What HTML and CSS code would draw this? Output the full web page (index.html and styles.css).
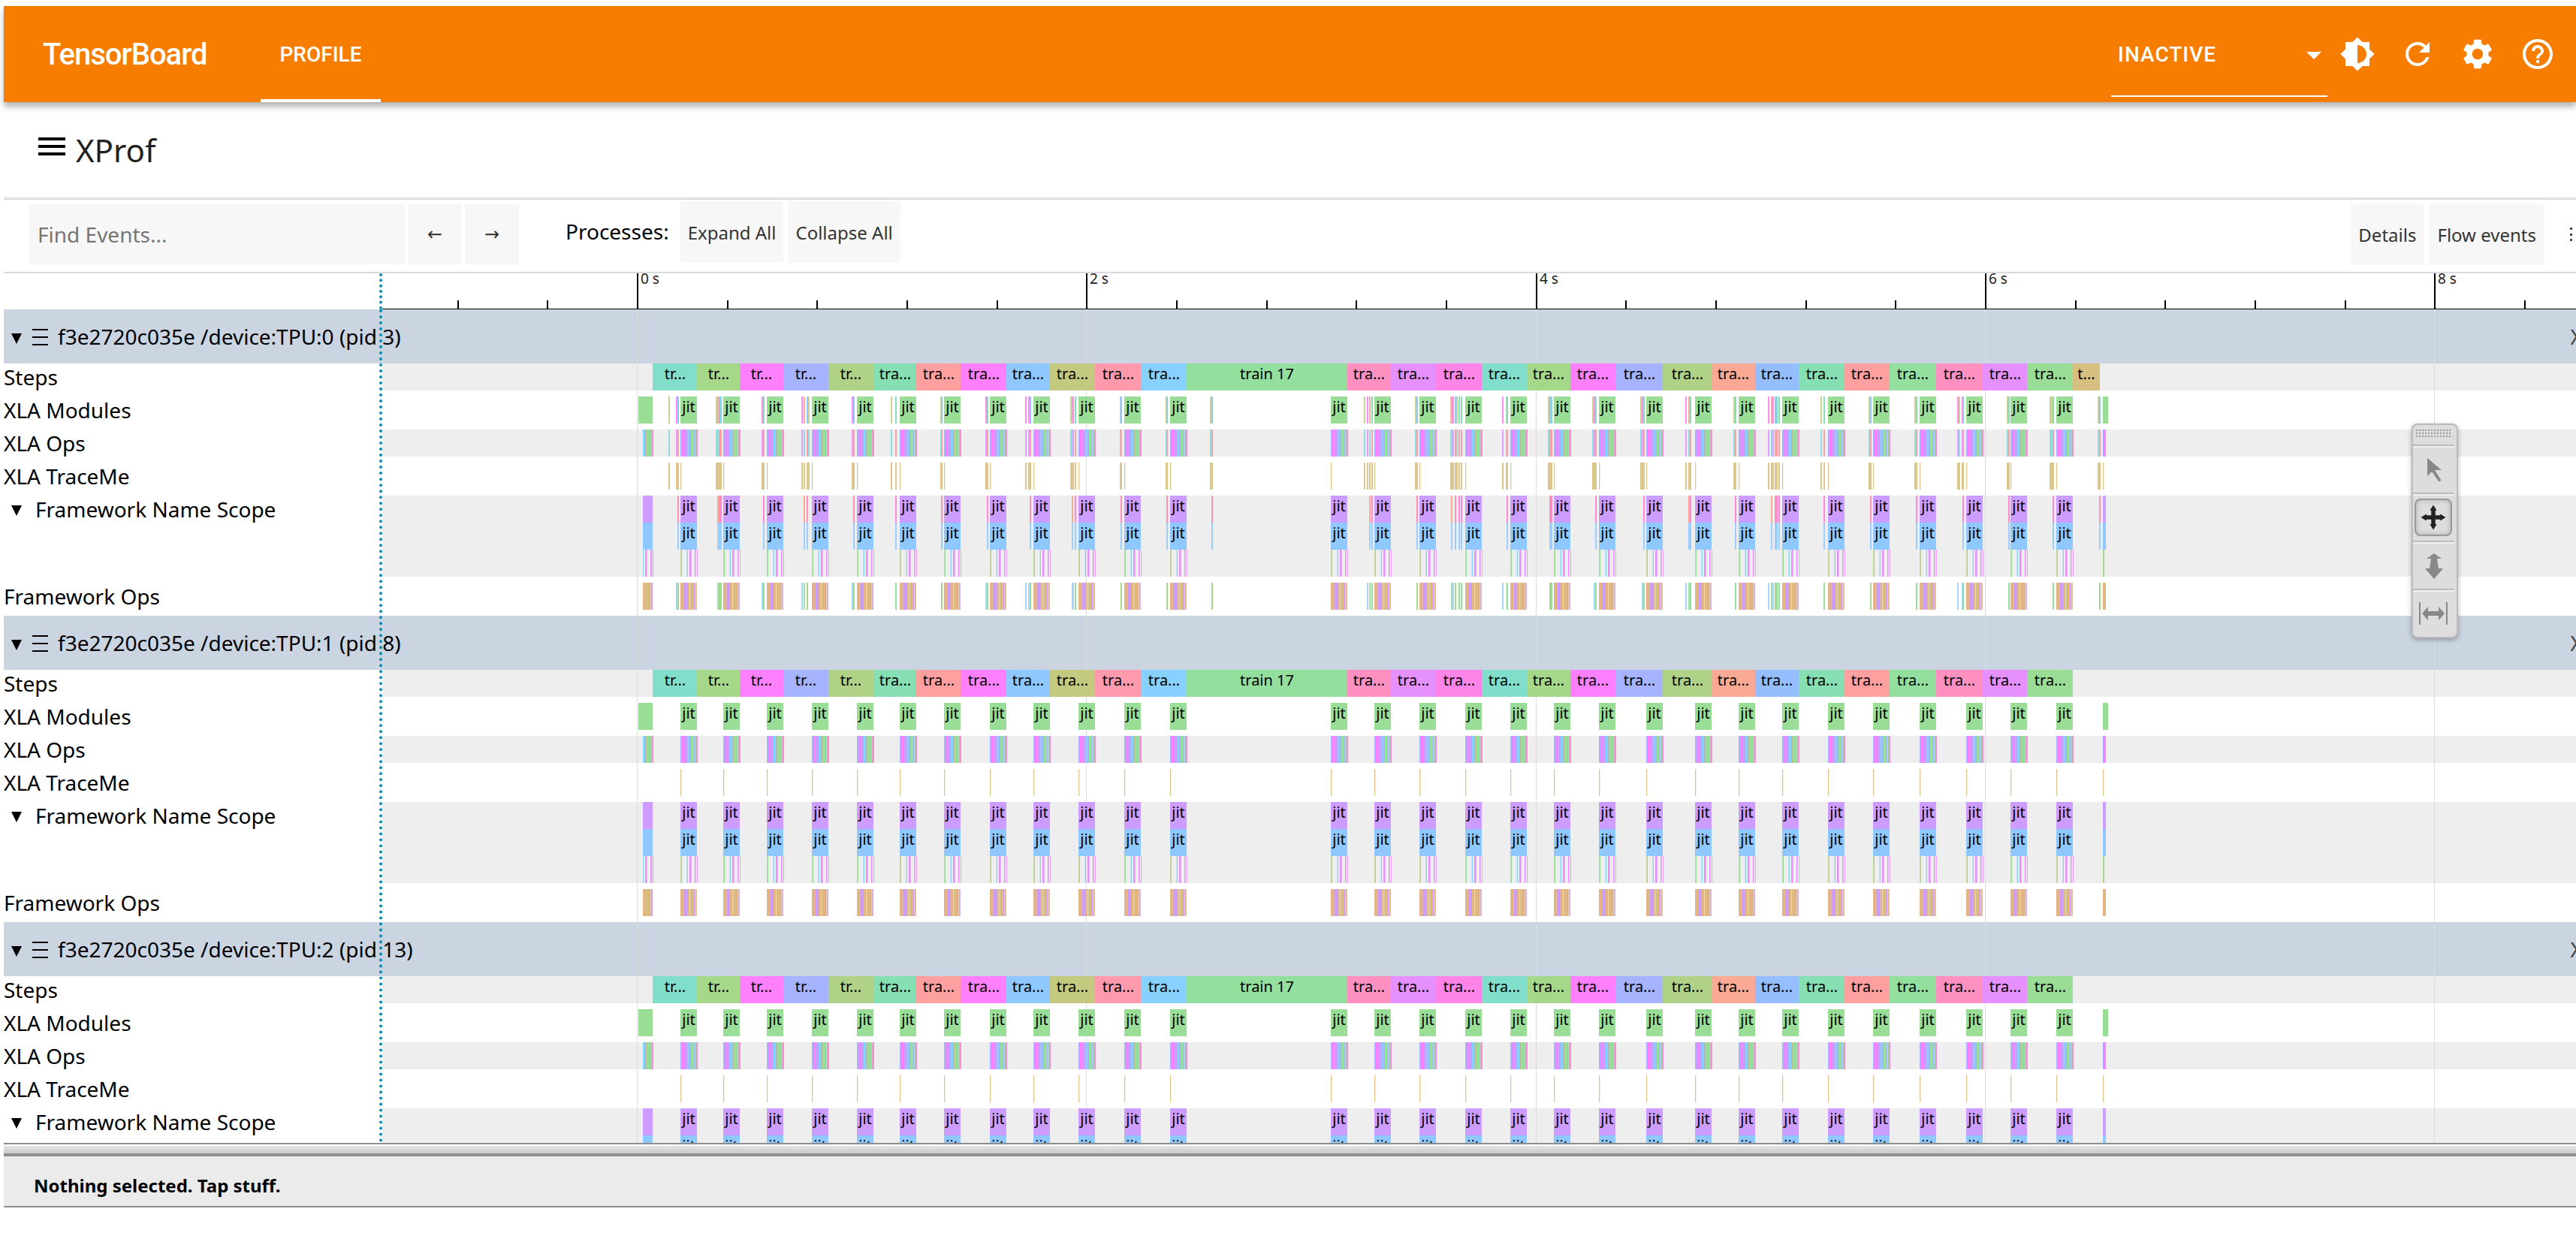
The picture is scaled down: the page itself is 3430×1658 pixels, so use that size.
FILE: index.html
```html
<!DOCTYPE html>
<html lang="en">
<head>
<meta charset="utf-8">
<title>TensorBoard</title>
<link rel="stylesheet" href="styles.css">
</head>
<body>
<header class="app-bar">
  <h1 class="brand">TensorBoard</h1>
  <nav class="tabs"><a class="tab" href="#profile" aria-current="page">PROFILE</a></nav>
  <div class="plugin-select">
    <select aria-label="Inactive plugins"><option>INACTIVE</option></select>
    <svg class="caret" viewBox="0 0 20 10" aria-hidden="true"><path d="M0 0h20L10 10z"/></svg>
  </div>
  <div class="actions">
    <button class="icon-button" aria-label="Toggle dark mode"><svg viewBox="0 0 24 24"><path d="M20 15.31L23.31 12 20 8.69V4h-4.69L12 .69 8.69 4H4v4.69L.69 12 4 15.31V20h4.69L12 23.31 15.31 20H20v-4.69zM12 18V6c3.31 0 6 2.69 6 6s-2.69 6-6 6z"/></svg></button>
    <button class="icon-button" aria-label="Reload"><svg viewBox="0 0 24 24"><path d="M17.65 6.35C16.2 4.9 14.21 4 12 4c-4.42 0-7.99 3.58-7.99 8s3.57 8 7.99 8c3.73 0 6.84-2.55 7.73-6h-2.08c-.82 2.33-3.04 4-5.65 4-3.31 0-6-2.69-6-6s2.69-6 6-6c1.66 0 3.14.69 4.22 1.78L13 11h7V4l-2.35 2.35z"/></svg></button>
    <button class="icon-button" aria-label="Settings"><svg viewBox="0 0 24 24"><path d="M19.14 12.94c.04-.3.06-.61.06-.94 0-.32-.02-.64-.07-.94l2.03-1.58c.18-.14.23-.41.12-.61l-1.92-3.32c-.12-.22-.37-.29-.59-.22l-2.39.96c-.5-.38-1.03-.7-1.62-.94L14.4 2.81c-.04-.24-.24-.41-.48-.41h-3.84c-.24 0-.43.17-.47.41L9.25 5.35C8.66 5.59 8.12 5.92 7.63 6.29L5.24 5.33c-.22-.08-.47 0-.59.22L2.74 8.87C2.62 9.08 2.66 9.34 2.86 9.48l2.03 1.58C4.84 11.36 4.8 11.69 4.8 12s.02.64.07.94l-2.03 1.58c-.18.14-.23.41-.12.61l1.92 3.32c.12.22.37.29.59.22l2.39-.96c.5.38 1.03.7 1.62.94l.36 2.54c.05.24.24.41.48.41h3.84c.24 0 .44-.17.47-.41l.36-2.54c.59-.24 1.13-.56 1.62-.94l2.39.96c.22.08.47 0 .59-.22l1.92-3.32c.12-.22.07-.47-.12-.61L19.14 12.94zM12 15.6c-1.98 0-3.6-1.62-3.6-3.6s1.62-3.6 3.6-3.6 3.6 1.62 3.6 3.6-1.62 3.6-3.6 3.6z"/></svg></button>
    <button class="icon-button" aria-label="Help"><svg viewBox="0 0 24 24"><path d="M11 18h2v-2h-2v2zm1-16C6.48 2 2 6.48 2 12s4.48 10 10 10 10-4.48 10-10S17.52 2 12 2zm0 18c-4.41 0-8-3.59-8-8s3.59-8 8-8 8 3.59 8 8-3.59 8-8 8zm0-14c-2.21 0-4 1.79-4 4h2c0-1.1.9-2 2-2s2 .9 2 2c0 2-3 1.75-3 5h2c0-2.25 3-2.5 3-5 0-2.21-1.79-4-4-4z"/></svg></button>
  </div>
</header>

<section class="title-bar">
  <button class="menu-button" aria-label="Open menu"><svg viewBox="0 0 36 24"><path d="M0 0h36v4H0zM0 10h36v4H0zM0 20h36v4H0z"/></svg></button>
  <h2 class="title">XProf</h2>
</section>

<main class="viewer">
  <div class="toolbar">
    <div class="search">
      <input class="find" type="text" placeholder="Find Events..." aria-label="Find events">
      <button class="tool step" aria-label="Previous match">←</button>
      <button class="tool step" aria-label="Next match">→</button>
    </div>
    <div class="processes">
      <span class="processes-label">Processes:</span>
      <button class="tool">Expand All</button>
      <button class="tool">Collapse All</button>
    </div>
    <div class="options">
      <button class="tool">Details</button>
      <button class="tool">Flow events</button>
      <button class="more" aria-label="More"><svg viewBox="0 0 3 18"><path d="M0 0h3v3H0zM0 8h3v3H0zM0 15h3v3H0z"/></svg></button>
    </div>
  </div>
  <div class="ruler"><div class="gutter"></div><svg class="scale" id="scale"></svg></div>
  <div class="tracks" id="tracks"><svg class="grid" id="grid"></svg></div>
  <div class="splitter"></div>
  <div class="analysis">Nothing selected. Tap stuff.</div>
</main>

<div class="palette" role="toolbar" aria-label="Mouse mode">
  <div class="handle"></div>
  <button class="mode" aria-label="Selection"><svg viewBox="0 0 50 50"><path d="M17 10v24l6-6 9 13q3 1 3-2l-8-13h9z"/></svg></button>
  <button class="mode selected" aria-label="Pan"><svg viewBox="0 0 50 50"><path d="M25 7l5 8h-2v7h7v-2l8 5-8 5v-2h-7v7h2l-5 8-5-8h2v-7h-7v2l-8-5 8-5v2h7v-7h-2z"/></svg></button>
  <button class="mode" aria-label="Zoom"><svg viewBox="0 0 50 50"><path d="M26 9l10 7h-6l2 13h6L26 43 14 29h6l2-13h-6z"/></svg></button>
  <button class="mode" aria-label="Timing"><svg viewBox="0 0 50 50"><path d="M6 10h2v30H6zM42 10h2v30h-2zM10 25l8-9v6h14v-6l8 9-8 9v-6H18v6z"/></svg></button>
</div>
<script src="trace.js"></script>
</body>
</html>
```
FILE: styles.css
```css
* { box-sizing: border-box; }
body {
  margin: 0;
  padding: 8px 0 50px 5px;
  height: 100vh;
  display: flex;
  flex-direction: column;
  overflow: hidden;
  background: #fff;
  color: #000;
  font-family: "Noto Sans", sans-serif;
  font-size: 28px;
}
button, select, input { font: inherit; color: inherit; border: 0; margin: 0; padding: 0; background: none; border-radius: 0; }
h1, h2 { margin: 0; font-weight: 400; }

/* App bar */
.app-bar {
  flex: none;
  position: relative;
  z-index: 2;
  display: flex;
  height: 128px;
  padding: 0 11px 0 52px;
  background: #f77d00;
  color: #fff;
  font-family: Roboto, sans-serif;
  font-weight: 500;
  box-shadow: 0 6px 8px rgba(0, 0, 0, .3);
}
.brand { align-self: center; font-size: 40px; font-weight: 500; letter-spacing: -1px; }
.tabs { display: flex; margin-left: 72px; }
.tab {
  display: flex;
  align-items: center;
  padding: 4px 25px 0;
  border-bottom: 4px solid #fff;
  color: #fff;
  text-decoration: none;
}
.plugin-select {
  position: relative;
  width: 288px;
  height: 121px;
  margin-left: auto;
  border-bottom: 2px solid #fff;
}
.plugin-select select { width: 100%; height: 100%; padding: 9px 9px 0; appearance: none; letter-spacing: 1px; }
.caret { position: absolute; right: 8px; top: 61px; width: 20px; height: 10px; fill: #fff; pointer-events: none; }
.actions { display: flex; align-items: center; }
.icon-button { display: grid; place-items: center; width: 80px; height: 80px; }
.icon-button svg { width: 48px; height: 48px; fill: #fff; }

/* Title */
.title-bar {
  flex: none;
  display: flex;
  align-items: flex-start;
  gap: 14px;
  height: 128px;
  padding: 37px 46px;
  border-bottom: 2px solid #efefef;
}
.menu-button { display: flex; margin-top: 10px; }
.menu-button svg { width: 36px; height: 24px; }
.title { font-size: 42px; line-height: 54px; color: #212121; }

/* Trace viewer */
.viewer { flex: 1; min-height: 0; display: flex; flex-direction: column; width: calc(100% + 9px); }
.toolbar {
  flex: none;
  display: flex;
  height: 100px;
  padding: 0 0 0 34px;
  border-top: 2px solid #dadae0;
  border-bottom: 2px solid #dadae0;
}
.search { display: flex; gap: 4px; padding-top: 6px; }
.find { width: 500px; height: 80px; padding: 0 11px; background: #f7f7f7; }
.find::placeholder { color: #757575; opacity: 1; }
.tool { height: 82px; padding: 0 10px; background: #f7f7f7; color: #333; font-size: 24px; }
.step { width: 72px; height: 80px; font-family: "DejaVu Sans", sans-serif; }
.processes { display: flex; gap: 6px; margin-left: 62px; padding-top: 2px; }
.processes-label { margin-right: 9px; line-height: 80px; }
.options { display: flex; gap: 8px; margin-left: auto; padding-top: 5px; }
.more { width: 44px; height: 82px; padding-left: 27px; text-align: left; }
.more svg { display: block; width: 3px; height: 18px; fill: #444; }

.ruler { flex: none; display: flex; height: 48px; }
.gutter { flex: none; width: 504px; border-right: 4px dotted #078bb0; }
.scale { flex: 1; height: 48px; font-size: 19px; overflow: visible; }

.tracks { flex: 1; min-height: 0; position: relative; overflow: hidden; }
.tracks::after {
  content: "";
  position: absolute;
  z-index: 3;
  inset: 0 auto 0 500px;
  border-right: 4px dotted #078bb0;
}
.grid { position: absolute; z-index: 1; left: 504px; top: 0; width: calc(100% - 504px); height: 100%; }
.process-head {
  display: flex;
  align-items: center;
  height: 72px;
  padding-left: 10px;
  background: #cad5e1;
}
.process-name { position: relative; z-index: 2; margin-left: 13px; }
.toggle { width: 14px; height: 14px; flex: none; }
.process-head .toggle { margin-top: 6px; }
.burger { width: 21px; height: 22px; margin: 2px 0 0 14px; }
.close { margin-left: auto; color: #444; }
.track { display: flex; }
.track-name {
  display: flex;
  align-items: center;
  flex: none;
  width: 504px;
  height: 36px;
}
.track-name .toggle { margin: 4px 18px 0 10px; }
.lane { flex: 1; height: 36px; margin-bottom: 8px; position: relative; font-size: 20px; }
.lane.tall { height: 108px; }
.lane.shade { background: #eee; }
.lane svg { position: relative; z-index: 2; display: block; width: 100%; height: 100%; overflow: visible; }
.lane text { text-anchor: middle; }

.splitter {
  flex: none;
  height: 18px;
  border-top: 2px solid #8e8e8e;
  border-bottom: 4px solid #8e8e8e;
  background: linear-gradient(#fff 2px, #e4e4e4 2px, #cacaca);
}
.analysis {
  flex: none;
  height: 68px;
  padding: 22px 40px 0;
  border-bottom: 2px solid #8e8e8e;
  background: #ebebeb;
  font-size: 24px;
  font-weight: 700;
  line-height: 34px;
}

/* Floating mouse-mode palette */
.palette {
  position: absolute;
  z-index: 5;
  right: 157px;
  top: 564px;
  width: 62px;
  border: 2px solid #bbb;
  border-radius: 8px;
  background: #ddd;
  box-shadow: 0 2px 6px rgba(0, 0, 0, .3);
}
.handle {
  width: 47px;
  height: 12px;
  margin: 6px 4px 8px;
  background: repeating-linear-gradient(90deg, transparent 0 2px, #ddd 2px 4px), repeating-linear-gradient(#999 0 2px, #ddd 2px 4px);
}
.mode {
  display: block;
  width: 54px;
  height: 64px;
  padding: 4px 2px;
  border-top: 2px solid #bbb;
  box-shadow: inset 0 2px #f2f2f2;
}
.mode svg { display: block; width: 50px; height: 50px; fill: #888; }
.mode.selected svg { fill: #222; border: 2px solid #999; border-radius: 8px; box-shadow: inset 0 0 6px #aaa; }
```
FILE: trace.js
```js
const NS = 'http://www.w3.org/2000/svg';
const ORIGIN = 509;   // x of the left edge of the lanes
const ZERO = 849;     // x of the 0 s mark
const JIT = 22;

// Each step: end position and colour. The first one starts at FIRST.
const FIRST = 869;
const STEPS = [
  [928, '#80deca'], [985, '#a6d88a'], [1043, '#ff80ff'], [1103, '#a6b3ff'], [1163, '#b0d287'],
  [1220, '#86dfb2'], [1279, '#ffa0a0'], [1340, '#ff80ff'], [1398, '#8fc7ff'], [1458, '#c3c97f'],
  [1519, '#ff9aad'], [1580, '#86d1ff'], [1794, '#92df9e'], [1852, '#ff90c0'], [1912, '#e690ff'],
  [1973, '#ff84e8'], [2033, '#80deca'], [2091, '#a6d88a'], [2151, '#ff80ff'], [2214, '#a6b3ff'],
  [2279, '#b0d287'], [2337, '#faaa94'], [2395, '#94beff'], [2456, '#86dfb2'], [2516, '#ffa0a0'],
  [2578, '#92df9e'], [2640, '#ff90c0'], [2699, '#e690ff'], [2760, '#99dd96']
];

// Short host-driven modules that run between steps on the first device.
const SHORT = '890c 900m 902b 953c 955r 957b 959g 1014m 1016g 1067m 1070r 1074b 1076c 1134m 1136b 1186c 1192g ' +
  '1252c 1253b 1312m 1314g 1365m 1369m 1371b 1425c 1427r 1428m 1431g 1491c 1492b 1552c 1553b 1611c 1613b ' +
  '1816c 1820m 1823r 1826g 1884c 1886b 1931c 1932r 1934m 1937b 1939c 1942g 1945g 2000m 2005c 2006g ' +
  '2061c 2063b 2065g 2120c 2122m 2124g 2184c 2186m 2188g 2244m 2248r 2250g 2308c 2310g 2354m 2358r 2360m 2363b 2365g 2368g ' +
  '2424c 2428g 2488c 2490b 2549c 2551g 2606m 2608c 2612m 2613g 2672c 2674g 2729c 2731c 2733g 2793c 2795b';
// module, ops, name scope, framework ops
const KINDS = {
  c: ['#ccd090', '#8fdede', null, null],
  m: ['#ff8cf4', '#e39cff', null, '#a6d6ff'],
  r: ['#ffa8a0', '#8fdede', '#faaa94', '#a6dfa6'],
  b: ['#8fc7ff', '#ffa0a8', '#ff90b8', '#a6d88a'],
  g: ['#86dfb2', '#f5a2ac', '#ff88d8', '#92df9e']
};
const shorts = SHORT.split(' ').map(s => [parseInt(s), KINDS[s.slice(-1)]]);

// Stripe patterns: [offset, width, colour] from the start of a jit slice.
const OPS = [[0, 2, '#a6b3ff'], [2, 3, '#ff80ff'], [5, 4, '#cc9dff'], [9, 3, '#86d1ff'], [12, 1, '#a6b3ff'],
  [13, 1, '#c3b98f'], [14, 4, '#92df9e'], [18, 1, '#a6b3ff'], [19, 1, '#b5e0b5'], [20, 1, '#92cf9e'], [21, 2, '#ff8cd8']];
const SCOPE = [[0, 1, '#c6d6a0'], [1, 1, '#99dd96'], [8, 1, '#cbe4f2'], [9, 1, '#86d1ff'], [12, 2, '#e690ff'],
  [14, 1, '#eabcf6'], [19, 1, '#e690ff'], [20, 1, '#eabcf6'], [22, 1, '#eaa0fa']];
const FOPS = [[0, 4, '#e3b584'], [4, 1, '#dcb0c0'], [5, 4, '#cc9dff'], [9, 3, '#e3b584'], [12, 1, '#ead9b8'],
  [13, 2, '#d7bf80'], [15, 3, '#e3b584'], [18, 1, '#cc9dff'], [19, 1, '#ead0b0'], [20, 1, '#e3b584'], [21, 1, '#d8b8f8']];

function el(parent, name, attrs, text) {
  const node = document.createElementNS(NS, name);
  for (const key in attrs) node.setAttribute(key, attrs[key]);
  if (text) node.textContent = text;
  parent.append(node);
  return node;
}
function bar(svg, x, width, fill, row = 0, label) {
  el(svg, 'rect', { x: x - ORIGIN, y: row * 36, width, height: 36, fill });
  if (label) el(svg, 'text', { x: x - ORIGIN + Math.round(width / 2), y: row * 36 + 21 }, label);
}
function stripes(svg, x, pattern, row) {
  pattern.forEach(([dx, w, fill]) => bar(svg, x + dx, w, fill, row));
}

const starts = STEPS.map(([end]) => end - JIT);
const lanes = {
  'Steps'(svg, first) {
    let x = FIRST;
    STEPS.forEach(([end, fill], i) => {
      bar(svg, x, end - x, fill, 0, i === 12 ? 'train 17' : i < 5 ? 'tr...' : 'tra...');
      x = end;
    });
    if (first) bar(svg, x, 36, '#d7bf80', 0, 't...');
  },
  'XLA Modules'(svg, first) {
    bar(svg, 850, 19, '#99dd96');
    if (first) shorts.forEach(([x, k]) => bar(svg, x, 2, k[0]));
    starts.forEach(x => bar(svg, x, JIT, '#99dd96', 0, 'jit'));
    bar(svg, 2800, 7, '#99dd96');
  },
  'XLA Ops'(svg, first) {
    stripes(svg, 856, [[0, 3, '#86d1ff'], [3, 1, '#a6b3ff'], [4, 1, '#c3b98f'], [5, 4, '#92df9e'], [9, 1, '#a6b3ff'],
      [10, 2, '#92df9e'], [12, 2, '#ff8cd8']]);
    if (first) shorts.forEach(([x, k]) => bar(svg, x, 2, k[1]));
    starts.forEach(x => stripes(svg, x, OPS));
    stripes(svg, 2800, [[0, 2, '#a6a8ff'], [2, 2, '#ff80ff']]);
  },
  'XLA TraceMe'(svg, first) {
    if (first) shorts.forEach(([x]) => bar(svg, x, 2, '#dcc68c'));
    starts.concat(2800).forEach(x => stripes(svg, x, [[0, 1, '#dcc68c'], [1, 1, '#f4eedc']]));
  },
  'Framework Name Scope'(svg, first) {
    ['#cc9dff', '#8fc7ff'].forEach((fill, row) => {
      bar(svg, 856, 13, fill, row);
      if (first) shorts.forEach(([x, k]) => k[2] && bar(svg, x, 2, row ? '#9ccdff' : k[2], row));
      starts.forEach(x => bar(svg, x, JIT, fill, row, 'jit'));
      bar(svg, 2800, 4, fill, row);
    });
    stripes(svg, 856, [[0, 1, '#86d1ff'], [3, 2, '#e690ff'], [5, 1, '#eabcf6'], [10, 2, '#e690ff'], [13, 1, '#e690ff']], 2);
    starts.forEach(x => stripes(svg, x, SCOPE, 2));
    bar(svg, 2800, 2, '#a6d88a', 2);
  },
  'Framework Ops'(svg, first) {
    stripes(svg, 856, [[0, 4, '#e3b584'], [4, 3, '#d7bf80'], [7, 2, '#e3b584'], [9, 1, '#cc9dff'], [10, 1, '#ead0b0'], [11, 2, '#cc9dff']]);
    if (first) shorts.forEach(([x, k]) => k[3] && bar(svg, x, 2, k[3]));
    starts.forEach(x => stripes(svg, x, FOPS));
    bar(svg, 2800, 4, '#e3b584');
  }
};

const TOGGLE = '<svg class="toggle" viewBox="0 0 14 14"><path d="M0 0h14L7 14z"/></svg>';
const BURGER = '<svg class="burger" viewBox="0 0 21 22"><path d="M0 0h21v2H0zM0 10h21v2H0zM0 20h21v2H0z"/></svg>';
const tracks = document.getElementById('tracks');
['f3e2720c035e /device:TPU:0 (pid 3)', 'f3e2720c035e /device:TPU:1 (pid 8)', 'f3e2720c035e /device:TPU:2 (pid 13)'].forEach((name, index) => {
  const head = document.createElement('div');
  head.className = 'process-head';
  head.innerHTML = TOGGLE + BURGER + '<span class="process-name">' + name + '</span><button class="close" aria-label="Hide process">X</button>';
  tracks.append(head);
  Object.keys(lanes).forEach((title, i) => {
    const tall = i === 4;
    const track = document.createElement('div');
    track.className = 'track';
    track.innerHTML = '<div class="track-name">' + (tall ? TOGGLE : '') + title + '</div>' +
      '<div class="lane' + (tall ? ' tall' : '') + (i % 2 ? '' : ' shade') + '"></div>';
    lanes[title](el(track.lastChild, 'svg', { 'shape-rendering': 'crispEdges' }), index === 0);
    tracks.append(track);
  });
});

// Ruler marks: a major one every two seconds, four minor ones between.
const scale = document.getElementById('scale');
const grid = document.getElementById('grid');
el(scale, 'rect', { x: 0, y: 47, width: '100%', height: 1 });
for (let i = -2; i <= 21; i++) {
  const x = Math.round(ZERO + i * 119.66) - ORIGIN - 1;
  const major = i % 5 === 0;
  el(scale, 'rect', { x, y: major ? 0 : 36, width: 2, height: major ? 48 : 12 });
  if (major) {
    el(scale, 'text', { x: x + 5, y: 14, fill: '#222' }, i / 5 * 2 + ' s');
    el(grid, 'rect', { x, y: 0, width: 1, height: '100%', fill: '#dcdcdc' });
  }
}
```
